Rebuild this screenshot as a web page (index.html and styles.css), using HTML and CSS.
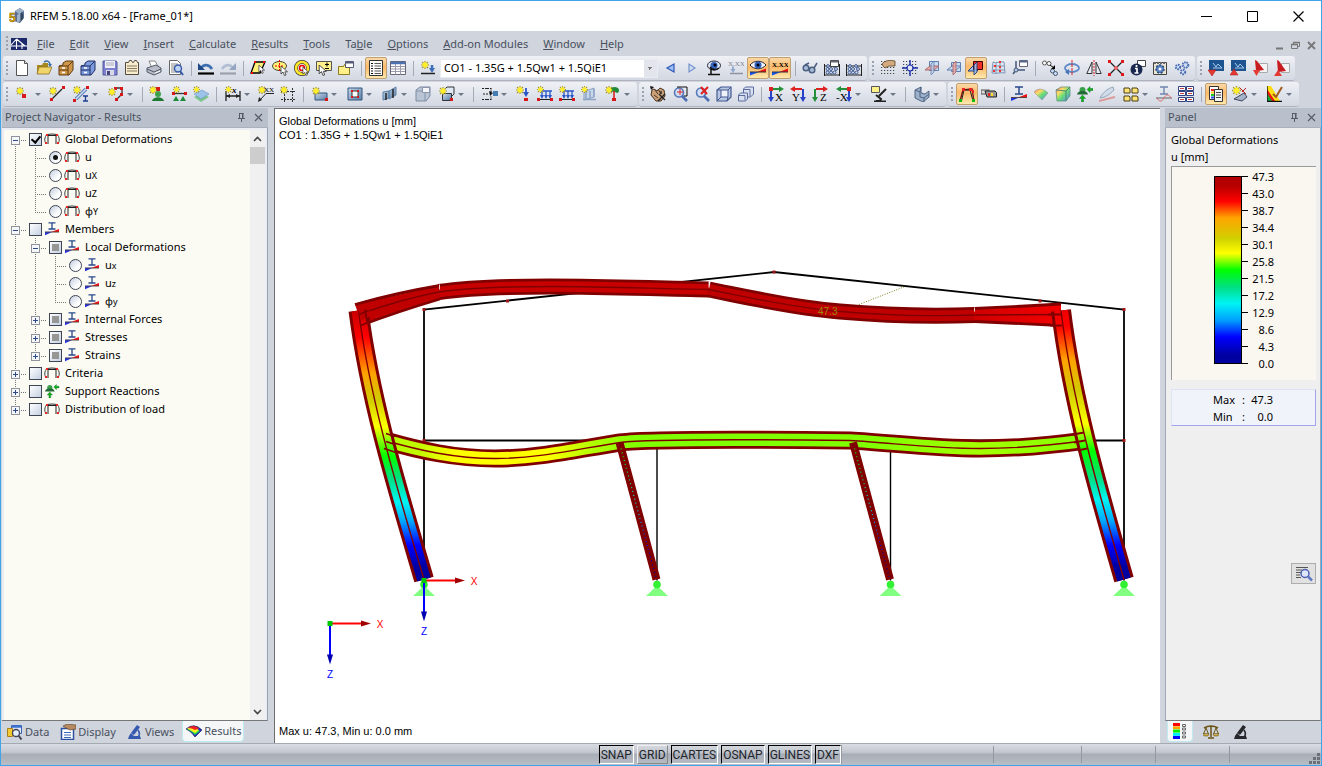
FILE: index.html
```html
<!DOCTYPE html>
<html lang="en">
<head>
  <meta charset="UTF-8">
  <meta name="viewport" content="width=device-width, initial-scale=1.0">
  <title>RFEM 5.18.00 x64 - [Frame_01*]</title>
  <link rel="stylesheet" href="styles.css">
</head>
<body>

<!-- icon sprite -->
<svg class="sprite" aria-hidden="true">
  <defs>
    <linearGradient id="g-steel" x1="0" y1="0" x2="1" y2="1"><stop offset="0" stop-color="#c6d8ea"/><stop offset="1" stop-color="#5c7da4"/></linearGradient>
    <linearGradient id="g-gold" x1="0" y1="0" x2="0" y2="1"><stop offset="0" stop-color="#f6e088"/><stop offset="1" stop-color="#b08a20"/></linearGradient>
    <linearGradient id="g-rain" x1="0" y1="0" x2="1" y2="1"><stop offset="0" stop-color="#f66"/><stop offset=".3" stop-color="#fd6"/><stop offset=".55" stop-color="#6d7"/><stop offset="1" stop-color="#58e"/></linearGradient>
  </defs>
  <symbol id="star" viewBox="0 0 8 8"><path d="M4 0v8M0 4h8M1 1l6 6M7 1L1 7" stroke="#a89828" stroke-width="1.200"/><circle cx="4" cy="4" r="2.400" fill="#ffef20"/><path d="M4 1v6M1 4h6" stroke="#ffee30"/></symbol>
  <symbol id="i-app" viewBox="0 0 16 16"><path d="M6 3l5-3 4 3v7l-4 5-6-2z" fill="#58708e"/><path d="M6 3l5-3 4 3-5 3zM8 7l3-2v8l-3 2z" fill="#9db1c8"/><path d="M12 4l2 2v5l-2 2z" fill="#34475f"/></symbol>
  <symbol id="i-bridge" viewBox="0 0 16 12"><path d="M0 0h16v12H0z" fill="#1c2a6c"/><path d="M0 8h16M5.500 1v10M11 5v6M5.500 1L0 7M5.500 1L14 8" stroke="#fff" stroke-width="1.100" fill="none"/></symbol>
  <symbol id="i-new" viewBox="0 0 16 16"><path d="M2.500.5h8l3 3v12h-11z" fill="#fff" stroke="#555"/><path d="M10.500.5v3h3" fill="#ddd" stroke="#555"/></symbol>
  <symbol id="i-open" viewBox="0 0 16 16"><path d="M1 5h5l1-2h5v11H1z" fill="#a8891f"/><path d="M3 7h13l-3 7H1z" fill="#f0d66a" stroke="#8a7020" stroke-width=".8"/><path d="M8 2c3-2 5-1 6 2" fill="none" stroke="#3c6ea8" stroke-width="1.600"/><path d="M12 4h4l-2 3z" fill="#3c6ea8"/></symbol>
  <symbol id="i-boxo" viewBox="0 0 16 16"><path d="M1 6l4-1V3l3-2h7v9l-4 5H1z" fill="#d0964a" stroke="#5e3c10"/><path d="M1 6h9l5-5M10 6v9M1 10h9" stroke="#5e3c10" fill="none"/><path d="M4 8h3M4 12.500h3" stroke="#fff" stroke-width="1.500"/></symbol>
  <symbol id="i-boxb" viewBox="0 0 16 16"><path d="M1 6l4-1V3l3-2h7v9l-4 5H1z" fill="#7d9bdc" stroke="#1e2f6a"/><path d="M1 6h9l5-5M10 6v9M1 10h9" stroke="#1e2f6a" fill="none"/><path d="M4 8h3M4 12.500h3" stroke="#fff" stroke-width="1.500"/></symbol>
  <symbol id="i-save" viewBox="0 0 16 16"><path d="M1 1h13l1 1v13H1z" fill="#7d7fd0" stroke="#555a9c"/><path d="M3 1h10v7H3z" fill="#eef0f6"/><path d="M4 3h8M4 5h8" stroke="#aab"/><path d="M4 10h8v5H4z" fill="#d8d8e8"/><path d="M5 11h3v4H5z" fill="#444878"/></symbol>
  <symbol id="i-report" viewBox="0 0 16 16"><path d="M1.500 2.500h3l1-2h2l1 2h1l1-2h2l1 2h1v12h-13z" fill="#f6edcf" stroke="#554a3a"/><path d="M3 6h10M3 8.500h10M3 11h10" stroke="#8c7b5c"/></symbol>
  <symbol id="i-print" viewBox="0 0 16 16"><path d="M3 1h6l3 5-6 2z" fill="#fff" stroke="#888"/><path d="M1 8l9-3 5 3v4l-7 3-7-3z" fill="#b9bdc9" stroke="#555a68"/><path d="M1 9l7 3 7-3" fill="none" stroke="#555a68"/><path d="M9 13l5-2" stroke="#fff"/></symbol>
  <symbol id="i-preview" viewBox="0 0 16 16"><path d="M1.500.5h8l3 3v11h-11z" fill="#fff" stroke="#666"/><path d="M3 4h7M3 6h7M3 8h5M3 10h5M3 12h6" stroke="#888"/><circle cx="10" cy="8.500" r="3.500" fill="#bcd4f2" stroke="#3759a8" stroke-width="1.400"/><path d="M12.500 11.500L15 15" stroke="#3759a8" stroke-width="2"/></symbol>
  <symbol id="i-undo" viewBox="0 0 16 16"><path d="M3 8c3-4 8-4 11 1" fill="none" stroke="#3f6fb0" stroke-width="2.600"/><path d="M0 3v7h7z" fill="#1f4a86"/><path d="M0 13.500h16" stroke="#000" stroke-width="2.200"/></symbol>
  <symbol id="i-redo" viewBox="0 0 16 16"><path d="M13 8C10 4 5 4 2 9" fill="none" stroke="#b3c0d4" stroke-width="2.600"/><path d="M16 3v7H9z" fill="#93a5c0"/><path d="M0 13.500h16" stroke="#9aa0ac" stroke-width="2.200"/></symbol>
  <symbol id="cursor" viewBox="0 0 8 10"><path d="M1 0v8l2-2 1.500 3.500L6 9 4.800 5.800H7.500z" fill="#fff" stroke="#333" stroke-width=".8"/></symbol>
  <symbol id="i-selpoly" viewBox="0 0 16 16"><path d="M5 2h10L10 13H1z" fill="#fff27a" stroke="#000" stroke-width="1.300"/><path d="M4 1h2v2H4zM13 1h2v2h-2zM1 12h2v2H1z" fill="#e00"/><use href="#cursor" x="8" y="5" width="7" height="9"/></symbol>
  <symbol id="i-selell" viewBox="0 0 16 16"><ellipse cx="7.500" cy="6" rx="7" ry="4.500" fill="#fff27a" stroke="#443"/><path d="M7.500 0v12M3 6h9" stroke="#e00" stroke-dasharray="2 1"/><use href="#cursor" x="8" y="6" width="8" height="10"/></symbol>
  <symbol id="i-selring" viewBox="0 0 16 16"><circle cx="8" cy="8" r="6" fill="#fff" stroke="#333" stroke-width="4"/><circle cx="8" cy="8" r="6" fill="none" stroke="#ffe92a" stroke-width="2.600"/><circle cx="8" cy="8" r="2.500" fill="none" stroke="#e00" stroke-width="1.500"/><use href="#cursor" x="8" y="7" width="7" height="9"/></symbol>
  <symbol id="i-selpm" viewBox="0 0 16 16"><path d="M.5 1.500h15v9H.5z" fill="#fff08a" stroke="#555"/><path d="M9 4.500h4M11 2.500v4M9 8.500h4" stroke="#000"/><use href="#cursor" x="2" y="5" width="9" height="11"/></symbol>
  <symbol id="i-selwin" viewBox="0 0 16 16"><path d="M.5 6.500h5l1-2h5v10H.5z" fill="#fff08a" stroke="#8c7b20"/><path d="M7.500 1.500h8v6h-8z" fill="#fff" stroke="#555a78"/><path d="M8 2.500h7" stroke="#555a78" stroke-width="2"/></symbol>
  <symbol id="i-nav" viewBox="0 0 16 16"><path d="M1.500.5h13v15h-13z" fill="#fff" stroke="#333"/><path d="M3 3.500h2M3 6h2M3 8.500h2M3 11h2M3 13.500h2" stroke="#111" stroke-width="1.200"/><path d="M6.500 3.500h6.500M6.500 6h6.500M6.500 8.500h6.500M6.500 11h6.500M6.500 13.500h6.500" stroke="#555"/></symbol>
  <symbol id="i-table" viewBox="0 0 16 16"><path d="M.5 1.500h15v13H.5z" fill="#fff" stroke="#667"/><path d="M1 3h14" stroke="#4b72b0" stroke-width="2.500"/><path d="M5.500 4v10.500M10.500 4v10.500M1 6.500h14M1 9h14M1 11.500h14" stroke="#99a"/></symbol>
  <symbol id="i-newload" viewBox="0 0 16 16"><use href="#star" x="1" y="1" width="8" height="8"/><path d="M1 13.500h14" stroke="#222" stroke-width="1.500"/><path d="M12 5v5" stroke="#3f6fb8" stroke-width="2.500"/><path d="M9 8h6l-3 5z" fill="#3f6fb8"/></symbol>
  <symbol id="i-prev" viewBox="0 0 16 16"><path d="M12 4v8L5 8z" fill="#9fc0f2" stroke="#2e58b8" stroke-width="1.200"/></symbol>
  <symbol id="i-next" viewBox="0 0 16 16"><path d="M5 4v8l6-4z" fill="#cfdcf2" stroke="#7492cc" stroke-width="1.200"/></symbol>
  <symbol id="i-eyesup" viewBox="0 0 16 16"><ellipse cx="8" cy="5.500" rx="6.500" ry="4.500" fill="#dfe8f8" stroke="#223"/><circle cx="8" cy="5.500" r="3.500" fill="#2f5fb8"/><circle cx="9" cy="5" r="1.500" fill="#001"/><path d="M4 7c3 4 6 3 9 1M5 8v6M2 14.500h12" fill="none" stroke="#111" stroke-width="1.500"/></symbol>
  <symbol id="i-xxload" viewBox="0 0 16 16"><path d="M2 13.500h13" stroke="#8d93a2" stroke-width="1.500"/><path d="M5 6.500v3" stroke="#93aad0" stroke-width="2"/><path d="M2.500 9h5L5 13z" fill="#93aad0"/></symbol>
  <symbol id="i-wedge" viewBox="0 0 16 16"><path d="M0 15.500V12h9z" fill="#15e"/><path d="M7 12h9V8.500z" fill="#e11"/><path d="M0 12h16" stroke="#333"/></symbol>
  <symbol id="i-eyeres" viewBox="0 0 16 16"><path d="M0 5C4 0 12 0 16 5c-4 5-12 5-16 0z" fill="#f4f6fb" stroke="#223"/><circle cx="8" cy="5" r="3.500" fill="#2f5fb8"/><circle cx="8" cy="5" r="1.500" fill="#001"/><use href="#i-wedge" width="16" height="16"/></symbol>
  <symbol id="i-glasses" viewBox="0 0 16 16"><g fill="#a8bcd8" stroke="#4a5f80" stroke-width="1.500"><circle cx="4" cy="8" r="2.800"/><circle cx="10" cy="10" r="2.800"/></g><path d="M3 5l4-2M12 8l3-5M7 8l1 1" stroke="#4a5f80" stroke-width="1.500"/></symbol>
  <symbol id="i-abacus" viewBox="0 0 16 16"><path d="M.5 4v12M15.500 4v12M1 6h14M1 15h14" stroke="#222"/><g fill="#c8d8f0" stroke="#27407c" stroke-width=".8"><circle cx="3.500" cy="9" r="1.500"/><circle cx="7" cy="9" r="1.500"/><circle cx="12" cy="9" r="1.500"/><circle cx="3.500" cy="12.500" r="1.500"/><circle cx="7" cy="12.500" r="1.500"/><circle cx="10.500" cy="12.500" r="1.500"/><circle cx="10" cy="6" r="1.400"/><circle cx="4" cy="6" r="1.400"/></g></symbol>
  <symbol id="i-abacusw" viewBox="0 0 16 16"><use href="#i-abacus" width="16" height="16"/><path d="M6.500.5h8v6h-8z" fill="#fff" stroke="#444"/><path d="M7 1.500h7" stroke="#667" stroke-width="2"/></symbol>
  <symbol id="dots" viewBox="0 0 16 16"><path d="M1 1.500h15M1 4.500h15M1 7.500h15M1 10.500h15M1 13.500h15" stroke="#444" stroke-width="1.200" stroke-dasharray="1.200 1.800"/></symbol>
  <symbol id="i-gridhand" viewBox="0 0 16 16"><use href="#dots" width="16" height="16"/><path d="M2 4c3-4 8-4 13-3v5H9L5 8 3 6z" fill="#d2aa7e" stroke="#5c4025" stroke-width=".8"/></symbol>
  <symbol id="i-gridsnap" viewBox="0 0 16 16"><use href="#dots" width="16" height="16"/><circle cx="8" cy="8" r="3" fill="#e4e8f6" stroke="#1a2ca8" stroke-width="1.200"/><path d="M8 0v5M8 11v5M0 8h5M11 8h5" stroke="#1a2ca8" stroke-width="1.400"/></symbol>
  <symbol id="i-plane1" viewBox="0 0 16 16"><path d="M5.500 1.500h9v9h-9z" fill="#cadcf0" stroke="#5c7fb0"/><path d="M1 10l5-4h9l-5 4z" fill="#eca8a4" stroke="#a86a70"/><path d="M7 4v11l3-3V1z" fill="#b8cce6" opacity=".75" stroke="#5c7fb0"/></symbol>
  <symbol id="i-plane2" viewBox="0 0 16 16"><path d="M5.500 2.500h9v9h-9z" fill="#cadcf0" stroke="#5c7fb0"/><path d="M1 10l5-4h9l-5 4z" fill="#cfdcee" stroke="#5c7fb0"/><path d="M7 4v11l3-3V1z" fill="#eca8a4" opacity=".9" stroke="#a86a70"/></symbol>
  <symbol id="i-plane3" viewBox="0 0 16 16"><path d="M0 11l5-5h9l-5 5z" fill="#9fc0ea" stroke="#1f3f80"/><path d="M5.500 1.500h9v8h-9z" fill="#f03028" stroke="#400"/><path d="M6 5v10l3-3V2z" fill="#9fc0ea" opacity=".9" stroke="#1f3f80"/></symbol>
  <symbol id="i-gridred" viewBox="0 0 16 16"><path d="M3 2c3 2 7-1 11 0l1 11c-4-1-8 1-13 0zM6 3v11M10 2v11M3 6h11M3 10h12" fill="none" stroke="#7d97bb"/><path d="M4 5h2v2H4zM9 1h2v2H9zM9 6h2v2H9zM3 10h2v2H3zM9 10h2v2H9z" fill="#e33"/></symbol>
  <symbol id="i-axwin" viewBox="0 0 16 16"><path d="M4 1v10M4 10h9M4 10l-3 4" fill="none" stroke="#44597c" stroke-width="1.500"/><circle cx="4" cy="10" r="2" fill="#b9c8e0" stroke="#44597c"/><path d="M7.500.5h8v6h-8z" fill="#fff" stroke="#667"/><path d="M8 1.500h7" stroke="#56698c" stroke-width="2"/></symbol>
  <symbol id="i-move" viewBox="0 0 16 16"><circle cx="2.500" cy="3" r="2" fill="#fff" stroke="#555"/><circle cx="7" cy="3.500" r="2" fill="#fff" stroke="#555"/><circle cx="10.500" cy="11" r="2" fill="#c8dcff" stroke="#456"/><circle cx="13.500" cy="13.500" r="2" fill="#c8dcff" stroke="#456"/><path d="M8 5l4 3" stroke="#000"/><path d="M13 5v4H9z" fill="#000"/></symbol>
  <symbol id="i-rotate" viewBox="0 0 16 16"><ellipse cx="8" cy="8" rx="7" ry="4" fill="none" stroke="#5f88c8" stroke-width="1.800"/><path d="M8 0v16" stroke="#d22" stroke-dasharray="3 1"/><path d="M5 9v6l-4-3z" fill="#4a74b8"/></symbol>
  <symbol id="i-mirror" viewBox="0 0 16 16"><path d="M6 2v11.500H.8zM10 2v11.500h5.200z" fill="#e8ecf4" stroke="#333"/><path d="M8 0v16" stroke="#d22" stroke-dasharray="2 1"/></symbol>
  <symbol id="i-cross" viewBox="0 0 16 16"><path d="M2 2l12 12M14 2L2 14" stroke="#222" stroke-width="1.300"/><path d="M0 0h3v3H0zM13 0h3v3h-3zM0 13h3v3H0zM13 13h3v3h-3z" fill="#e01818"/><circle cx="8" cy="8" r="2" fill="#e66"/></symbol>
  <symbol id="i-info" viewBox="0 0 16 16"><path d="M7.500.5h8v6h-8z" fill="#fff" stroke="#444"/><circle cx="6.500" cy="9.500" r="6" fill="#1a2850"/><path d="M6.500 5v2M5 8.500h2v4.500M4.500 13h4" stroke="#fff" stroke-width="1.700" fill="none"/></symbol>
  <symbol id="i-calgear" viewBox="0 0 16 16"><path d="M1.500 2.500h13v12h-13z" fill="#ebe6d4" stroke="#444"/><path d="M2 3h12" stroke="#666" stroke-width="2" stroke-dasharray="2 1"/><circle cx="8" cy="9" r="4" fill="#5a80c0"/><circle cx="8" cy="9" r="4" fill="none" stroke="#26477e" stroke-width="1.500" stroke-dasharray="2 1.500"/><circle cx="8" cy="9" r="1.500" fill="#fff"/></symbol>
  <symbol id="i-gears" viewBox="0 0 16 16"><g fill="#cddcf4" stroke="#4a6cb0" stroke-width="2" stroke-dasharray="1.500 .8"><circle cx="4" cy="7" r="2.200"/><circle cx="11.500" cy="5" r="2.800"/><circle cx="9" cy="12" r="2.200"/></g></symbol>
  <symbol id="i-impb" viewBox="0 0 16 16"><path d="M1 0h15v11H1z" fill="#1e5490"/><path d="M5 3l3 4 2-3 4 4M5 8h9" stroke="#a7cdf0" fill="none"/><path d="M0 10h8l-4 6z" fill="#e33a34" stroke="#a11" stroke-width=".5"/></symbol>
  <symbol id="i-expb" viewBox="0 0 16 16"><path d="M1 0h15v11H1z" fill="#1e5490"/><path d="M5 3l3 4 2-3 4 4M5 8h9" stroke="#a7cdf0" fill="none"/><path d="M0 15h8l-4-6z" fill="#e33a34" stroke="#a11" stroke-width=".5"/></symbol>
  <symbol id="i-impr" viewBox="0 0 16 16"><path d="M7.500 3.500h8v9h-8z" fill="#f4f4f4" stroke="#aaa"/><path d="M3 0l2 1 7 9-8 1z" fill="#c81c20"/><path d="M1 10h7l-3.500 6z" fill="#e33a34"/></symbol>
  <symbol id="i-expr" viewBox="0 0 16 16"><path d="M7.500 3.500h8v9h-8z" fill="#f4f4f4" stroke="#aaa"/><path d="M3 0l2 1 7 10-8 1z" fill="#c81c20"/><path d="M0 16h8l-4-6z" fill="#e33a34"/></symbol>
  <!-- second row -->
  <symbol id="i-node" viewBox="0 0 16 16"><use href="#star" x="0" y="1" width="8" height="8"/><path d="M6 8h4v4H6z" fill="#d81818"/></symbol>
  <symbol id="i-line" viewBox="0 0 16 16"><path d="M3 13L13 3" stroke="#222" stroke-width="1.300"/><path d="M13 0h3v3h-3zM1 12h3v3H1z" fill="#d81818"/><use href="#star" x="0" y="1" width="8" height="8"/></symbol>
  <symbol id="i-member" viewBox="0 0 16 16"><path d="M3 13L13 3" stroke="#5b7eb4" stroke-width="3.500"/><path d="M3 13L13 3" stroke="#cfe0f5" stroke-width="1.500"/><path d="M13 0h3v3h-3zM0 13h3v3H0z" fill="#d81818"/><path d="M10 10h5M12.500 10v5M10 15h5" stroke="#1e3c90" stroke-width="1.300"/><use href="#star" x="0" y="0" width="8" height="8"/></symbol>
  <symbol id="i-polyl" viewBox="0 0 16 16"><path d="M6 2h8v6l-6 6" fill="none" stroke="#333" stroke-width="1.300"/><path d="M6 1h3v3H6zM12 1h3v3h-3zM12 7h3v3h-3zM7 12h3v3H7z" fill="#d81818"/><use href="#star" x="0" y="2" width="8" height="8"/></symbol>
  <symbol id="i-nsup" viewBox="0 0 16 16"><path d="M7 1h4v4H7z" fill="#d81818"/><circle cx="9" cy="8" r="3" fill="#3ba04a"/><path d="M3 15c1-5 11-5 12 0z" fill="#1d7a30"/><use href="#star" x="0" y="0" width="8" height="8"/></symbol>
  <symbol id="i-lsup" viewBox="0 0 16 16"><path d="M2 7.500h13" stroke="#333" stroke-width="1.300"/><path d="M1 6h3v3H1zM13 6h3v3h-3z" fill="#d81818"/><path d="M2 15l3-5 3 5zM9 15l3-5 3 5z" fill="#1f8a38"/><use href="#star" x="2" y="0" width="7" height="7"/></symbol>
  <symbol id="i-ssup" viewBox="0 0 16 16"><path d="M1 11l8-4 7 4-8 5z" fill="#7cc68a"/><path d="M1 8l8-4 7 4-8 5z" fill="#9bc3ea" stroke="#6b93bd" stroke-width=".6"/><use href="#star" x="0" y="0" width="7" height="7"/></symbol>
  <symbol id="i-dim" viewBox="0 0 16 16"><path d="M1 5v10M15 5v10M1 10h14" stroke="#222" stroke-width="1.300"/><path d="M1 10l4-2v4zM15 10l-4-2v4z" fill="#222"/><use href="#star" x="0" y="0" width="7" height="7"/></symbol>
  <symbol id="i-cmt" viewBox="0 0 16 16"><path d="M2 14L8 7.500h8" stroke="#222" fill="none"/><path d="M0 16l1-5 3 3z" fill="#222"/><use href="#star" x="0" y="0" width="8" height="8"/></symbol>
  <symbol id="i-guide" viewBox="0 0 16 16"><path d="M4.500 2v14M12.500 2v14M1 5.500h15M1 13.500h15" stroke="#333" stroke-dasharray="2 1"/><use href="#star" x="0" y="0" width="8" height="8"/></symbol>
  <symbol id="i-surf" viewBox="0 0 16 16"><path d="M3 7h12v7H3z" fill="url(#g-steel)" stroke="#33587f"/><path d="M13 12h3v3h-3z" fill="#d81818"/><use href="#star" x="0" y="1" width="8" height="8"/></symbol>
  <symbol id="i-opening" viewBox="0 0 16 16"><path d="M1 2h14v12H1z" fill="url(#g-steel)" stroke="#33587f"/><path d="M5 5h6v6H5z" fill="#fff" stroke="#333"/><path d="M4 4h2v2H4zM10 4h2v2h-2zM4 10h2v2H4zM10 10h2v2h-2z" fill="#d81818"/></symbol>
  <symbol id="i-intersect" viewBox="0 0 16 16"><path d="M1 6l6-1v7l-6 2zM7 5l7-4v8l-7 4z" fill="url(#g-steel)" stroke="#5d82a9"/><path d="M4 7v7M11 3v9" stroke="#111" stroke-width="1.300"/></symbol>
  <symbol id="i-solid" viewBox="0 0 16 16"><path d="M1 4l4-3h10v9l-4 5H1z" fill="#b9c4d4" stroke="#7e8ca2"/><path d="M1 5h9v10M10 5l5-4" fill="none" stroke="#8796ac"/><path d="M7.500 1.500h7v5h-7z" fill="#f4f6fa" stroke="#8796ac"/></symbol>
  <symbol id="i-solidn" viewBox="0 0 16 16"><path d="M3.500 7.500h9v7h-9zM5 4l3-3h7v7l-3 3" fill="#dfe9f4" stroke="#333"/><path d="M4 8h8v6H4z" fill="url(#g-steel)"/><path d="M11 12h3v3h-3z" fill="#d81818"/><use href="#star" x="0" y="1" width="8" height="8"/></symbol>
  <symbol id="i-flow" viewBox="0 0 16 16"><path d="M0 2.500h5M0 13.500h5M5 2.500h4v4M5 13.500h4v-3M1 8h6" fill="none" stroke="#222" stroke-width="1.200" stroke-dasharray="2 1"/><path d="M11 5h5v5h-5z" fill="#447cb4"/><path d="M7 5l4 2-3 3z" fill="#111"/></symbol>
  <symbol id="i-nload" viewBox="0 0 16 16"><path d="M11 2v6" stroke="#2b58c8" stroke-width="1.800"/><path d="M8 6h6l-3 5z" fill="#2b58c8"/><path d="M9 12h4v3H9z" fill="#d81818"/><use href="#star" x="1" y="0" width="8" height="8"/></symbol>
  <symbol id="i-mload" viewBox="0 0 16 16"><path d="M3 5h12M5 5v6M9 5v6M13 5v6" stroke="#2b58c8" stroke-width="1.300"/><path d="M3 9h4l-2 4zM7 9h4l-2 4zM11 9h4l-2 4z" fill="#2b58c8"/><path d="M1 13.500h14" stroke="#222"/><path d="M0 12h3v3H0zM13 12h3v3h-3z" fill="#d81818"/><use href="#star" x="0" y="0" width="7" height="7"/></symbol>
  <symbol id="i-sload" viewBox="0 0 16 16"><path d="M3 6l10-4v9L3 14z" fill="#c7d8ec" stroke="#8aa0be"/><path d="M5 6v7M9 5v7M13 3v8M2 13.500h13" stroke="#8ea4c6" stroke-width="1.500"/><use href="#star" x="0" y="0" width="7" height="7"/></symbol>
  <symbol id="i-imp" viewBox="0 0 16 16"><path d="M5 4c0-4 9-4 9 0s-3 3-4 2-5 1-5-2z" fill="#1f8a38"/><path d="M9 5v8" stroke="#d81818" stroke-width="1.500"/><path d="M7 12h4v3H7z" fill="#d81818"/><use href="#star" x="0" y="0" width="8" height="8"/></symbol>
  <symbol id="i-hand" viewBox="0 0 16 16"><path d="M2 4l2-1 3 2 3-3 4 2 1 6-4 5H6L1 9z" fill="#c9a077" stroke="#4a3420"/><path d="M5 4l3 4M8 3l3 5M4 9l4 3" stroke="#4a3420"/><path d="M9 8l6 6M15 8l-7 7M11 5v3" stroke="#222" stroke-width="1.300"/><path d="M0 0l4 1-3 3z" fill="#111"/></symbol>
  <symbol id="mag" viewBox="0 0 16 16"><circle cx="7" cy="6.500" r="4.500" fill="#cfe0f6" stroke="#5878b8" stroke-width="1.600"/><path d="M10 10l5 5" stroke="#4e6eb4" stroke-width="2.600"/></symbol>
  <symbol id="i-zoomw" viewBox="0 0 16 16"><use href="#mag" width="16" height="16"/><path d="M5 1h10v9h-3" fill="none" stroke="#111"/><path d="M5 6h6M8 3v6" stroke="#d22"/></symbol>
  <symbol id="i-zoomx" viewBox="0 0 16 16"><use href="#mag" width="16" height="16"/><path d="M7 1l6 7M14 1L7 8" stroke="#e02020" stroke-width="2"/></symbol>
  <symbol id="i-cube" viewBox="0 0 16 16"><path d="M1 4l4-3h10v10l-4 4H1z" fill="#b9c8e4" stroke="#43598e" stroke-width="1.200"/><path d="M5 4h7v7H5zM1 4h4M12 4l3-3M12 11l-1 4M5 11l-4 4" fill="#eef3fb" stroke="#43598e"/></symbol>
  <symbol id="i-cubes" viewBox="0 0 16 16"><g fill="#d8e0f2" stroke="#5a6c9c"><path d="M5.500 3l2-2h8v7l-3 3h-7z"/><path d="M6 3.500h6v7"/><path d="M.5 9l2-2h7v6l-2 2h-7z"/><path d="M1 9.500h6v5"/></g></symbol>
  <symbol id="i-vx" viewBox="0 0 16 16"><path d="M4 3h8" stroke="#25903a" stroke-width="2"/><path d="M11 0l5 3-5 3z" fill="#25903a"/><path d="M3 3v9" stroke="#2842c8" stroke-width="2"/><path d="M0 11h6l-3 5z" fill="#2842c8"/><path d="M1 1h4v4H1z" fill="#d22"/></symbol>
  <symbol id="i-vy" viewBox="0 0 16 16"><path d="M12 3H4" stroke="#d22" stroke-width="2"/><path d="M5 0L0 3l5 3z" fill="#d22"/><path d="M13 3v9" stroke="#2842c8" stroke-width="2"/><path d="M10 11h6l-3 5z" fill="#2842c8"/></symbol>
  <symbol id="i-vz" viewBox="0 0 16 16"><path d="M4 3h8" stroke="#d22" stroke-width="2"/><path d="M11 0l5 3-5 3z" fill="#d22"/><path d="M3 3v9" stroke="#25903a" stroke-width="2"/><path d="M0 11h6l-3 5z" fill="#25903a"/></symbol>
  <symbol id="i-vmx" viewBox="0 0 16 16"><path d="M12 3H4" stroke="#25903a" stroke-width="2"/><path d="M5 0L0 3l5 3z" fill="#25903a"/><path d="M13 3v9" stroke="#2842c8" stroke-width="2"/><path d="M10 11h6l-3 5z" fill="#2842c8"/><path d="M11 1h4v4h-4z" fill="#d22"/></symbol>
  <symbol id="i-views" viewBox="0 0 16 16"><path d="M.5.5h8v6h-8z" fill="#fff08a" stroke="#555"/><path d="M15 3L8 10M5 9l5 4-1 2H5M3 15.500h12" stroke="#222" stroke-width="2" fill="none"/></symbol>
  <symbol id="i-block" viewBox="0 0 16 16"><path d="M1 4l6-3v6l4 1 4-3v6l-6 5-8-4z" fill="#9db0ca" stroke="#4f6584"/><path d="M1 4l5 2v5l4 1v4M10 12l5-4M6 6l1-5" stroke="#4f6584" fill="none"/></symbol>
  <symbol id="i-frame" viewBox="0 0 16 16"><path d="M1 15L4 4l9-1 2 12" fill="none" stroke="#7a1a10" stroke-width="1.400"/><path d="M2.500 15L5 4h6l3 11" fill="none" stroke="#222"/><path d="M3 2h3v3H3zM10 2h3v3h-3zM13 4h2v3h-2z" fill="#e22"/><path d="M0 13h3v3H0zM13 13h3v3h-3z" fill="#1b1"/></symbol>
  <symbol id="i-torch" viewBox="0 0 16 16"><rect x="0" y="4" width="8" height="4" fill="#d8d8d8" stroke="#555"/><path d="M4 5h10l1.500 1.500V11H6z" fill="#999" stroke="#222"/><path d="M7 7h2v3H7z" fill="#e22"/><path d="M10 7h2v3h-2z" fill="#fd2"/></symbol>
  <symbol id="i-imem" viewBox="0 0 16 16"><path d="M4 1h8M8 1v7M4 8h8" stroke="#2a4a8c" stroke-width="1.500"/><path d="M0 11h9L0 15z" fill="#23d"/><path d="M7 11.500h9V8z" fill="#e11"/><path d="M0 11.500h16" stroke="#544"/></symbol>
  <symbol id="i-surfres" viewBox="0 0 16 16"><path d="M1 6c4-4 9-4 14 1l-6 7z" fill="url(#g-rain)" stroke="#888" stroke-width=".5"/></symbol>
  <symbol id="i-solres" viewBox="0 0 16 16"><path d="M1 4l5-3h9v9l-4 5H2z" fill="url(#g-rain)" stroke="#587" stroke-width=".7"/><path d="M1 4l10 1v10M11 5l4-4" fill="none" stroke="#587"/></symbol>
  <symbol id="i-supr" viewBox="0 0 16 16"><circle cx="5.500" cy="4" r="3" fill="#3aa04c"/><path d="M0 8.500c1-5 10-5 11 0z" fill="#226b34"/><path d="M10 3.500l3-3v2h3v2h-3v2zM5.500 9l3 3.500h-2V16h-2v-3.500h-2z" fill="#12b012" stroke="#063" stroke-width=".4"/></symbol>
  <symbol id="i-slice" viewBox="0 0 16 16"><path d="M1 12C5 5 10 2 14 1l1 3C10 9 7 11 1 12z" fill="#cfdbe8" stroke="#93a5ba"/><path d="M0 15l16-4" stroke="#d99" stroke-width="2"/></symbol>
  <symbol id="i-four" viewBox="0 0 16 16"><g fill="#ffe478" stroke="#4a3f10"><path d="M1 2h5l1 1v4H1zM9 2h5l1 1v4H9zM1 10h5l1 1v4H1zM9 10h5l1 1v4H9z"/></g></symbol>
  <symbol id="i-iwave" viewBox="0 0 16 16"><path d="M4 1h8M8 1v7M4 8h8" stroke="#7085ae" stroke-width="1.400"/><path d="M0 12h16" stroke="#666"/><path d="M1 12c2 4 5 4 7 0s5-4 7 0" fill="none" stroke="#d66"/></symbol>
  <symbol id="i-multi" viewBox="0 0 16 16"><path d="M.5.5h7v4h-7zM8.500.5h7v4h-7zM.5 5.500h7v4h-7zM8.500 5.500h7v4h-7zM.5 11.500h7v4h-7zM8.500 11.500h7v4h-7z" fill="#fff" stroke="#2f4080"/><path d="M2 2.500h4M10 2.500h4M2 7.500h4M10 7.500h4M2 13.500h4M10 13.500h4" stroke="#c44"/></symbol>
  <symbol id="i-panel" viewBox="0 0 16 16"><path d="M1.500.5h9v13h-9z" fill="#fff" stroke="#333"/><path d="M6.500 3.500h8v12h-8z" fill="#f4f4f4" stroke="#333"/><path d="M3 4h3" stroke="#e22" stroke-width="2"/><path d="M3 6.500h3" stroke="#fc2" stroke-width="2"/><path d="M3 9h3" stroke="#2c2" stroke-width="2"/><path d="M3 11.500h3" stroke="#24e" stroke-width="2"/><path d="M8 6.500h5M8 9h5M8 11.500h5" stroke="#444"/></symbol>
  <symbol id="i-edge" viewBox="0 0 16 16"><path d="M2 13l10-6 3 4-5 4z" fill="#a4b4cb" stroke="#445"/><path d="M8 2l6 6M14 2l-4 4" stroke="#b22"/><use href="#star" x="0" y="0" width="9" height="9"/></symbol>
  <symbol id="i-colors" viewBox="0 0 16 16"><path d="M0 0h4l9 15H0z" fill="#fd1"/><path d="M0 3l8 12H3L0 11z" fill="#e11"/><path d="M0 7l5 8H0z" fill="#1a3"/><path d="M0 0v15.500h15" stroke="#111" stroke-width="1.300" fill="none"/><path d="M6 8l3 3 6-10" fill="none" stroke="#a25a1c" stroke-width="2"/></symbol>
  <!-- navigator and panel -->
  <symbol id="i-glob" viewBox="0 0 16 12"><path d="M4 11V2.500h8V11" fill="none" stroke="#222"/><path d="M3 1Q-1 6 2 11M13 1q4 5 1 10" fill="none" stroke="#444"/><path d="M3 1.500q5-1 10 0" fill="none" stroke="#333"/><path d="M2 1h2v2H2zM12 1h2v2h-2zM1 9h2v2H1zM13 9h2v2h-2z" fill="#e22"/></symbol>
  <symbol id="i-data" viewBox="0 0 16 16"><path d="M4.500 1.500h10v8h-10z" fill="#dfe8f8" stroke="#3b62b0"/><path d="M5 2.500h9" stroke="#3b72d0" stroke-width="2.500"/><path d="M.5 4.500h5v8h-5z" fill="#f5c932" stroke="#a8801c"/><circle cx="9" cy="9" r="3.500" fill="#e5f0ff" stroke="#445" stroke-width="1.300"/><path d="M11.500 11.500l3 4" stroke="#445" stroke-width="2"/></symbol>
  <symbol id="i-disp" viewBox="0 0 16 16"><path d="M1.500 4.500h12v11h-12z" fill="#fff" stroke="#2c50a0" stroke-width="1.500"/><path d="M4 8.500h7M4 11h7M4 13.500h7" stroke="#3a68c0"/><path d="M3 2l4-2 9 1v4l-6 1-4-2z" fill="#b78a62" stroke="#573c22" stroke-width=".6"/></symbol>
  <symbol id="i-scope" viewBox="0 0 16 16"><path d="M10 1l3 2-6 8-3-2z" fill="currentColor"/><path d="M2 12h11l1 3H1zM4 9l-2 3h5z" fill="currentColor"/><path d="M11 6c2 3 2 5 0 7" stroke="currentColor" stroke-width="1.600" fill="none"/></symbol>
  <symbol id="i-results" viewBox="0 0 16 12"><path d="M0 4Q8-3 16 5L9 12Q5 6 0 4z" fill="#22c" stroke="#124" stroke-width=".6"/><path d="M1 4Q8 2 14 6L9 10Q5 6 1 4z" fill="#2d4"/><path d="M1 3.500Q7 1 13 5L9 8Q5 5 1 3.500z" fill="#fe2"/><path d="M2 3Q8-1 13 3.500L9 5Q6 3 2 3z" fill="#e22"/></symbol>
  <symbol id="i-legend" viewBox="0 0 14 16"><path d="M0 0h7v3H0z" fill="#f00"/><path d="M0 3.300h7v3H0z" fill="#ffa500"/><path d="M0 6.600h7v3H0z" fill="#0e0"/><path d="M0 9.900h7v3H0z" fill="#0ef"/><path d="M0 13h7v3H0z" fill="#00f"/><path d="M9.500 1.500h3v2h-3zM9.500 5h3v2h-3zM9.500 9h3v2h-3zM9.500 13h3v2h-3z" fill="none" stroke="#666"/></symbol>
  <symbol id="i-scale" viewBox="0 0 16 16"><path d="M1 4q7-4 14 0M8 2v11M5 14h6" stroke="#6a5312" stroke-width="1.500" fill="none"/><path d="M3 4L.5 10h5zM13 4l-2.500 6h5z" fill="none" stroke="#6a5312"/><path d="M0 10h6l-1 2H1zM10 10h6l-1 2h-4z" fill="url(#g-gold)" stroke="#6a5312" stroke-width=".5"/></symbol>
  <symbol id="i-find" viewBox="0 0 18 16"><path d="M1 1.500h12M1 4h6M1 6.500h5M1 9h4M1 11.500h5" stroke="#555" stroke-width="1.200"/><circle cx="10" cy="7.500" r="4" fill="#dfe6fa" stroke="#4a60b0" stroke-width="1.500"/><path d="M13 10.500l4 4" stroke="#5f78c4" stroke-width="2.500"/></symbol>
  <symbol id="i-pin" viewBox="0 0 9 11"><path d="M2.500 1v5M2 1.500h4.500M6 1v5M1 6.500h7M4.500 7v3" stroke="#555c68" fill="none"/><path d="M5 2v4h1V2z" fill="#555c68"/></symbol>
  <symbol id="i-x" viewBox="0 0 9 9"><path d="M1 1l7 7M8 1L1 8" stroke="#555c68" stroke-width="1.200"/></symbol>
</svg>

<div class="window">
  <header class="titlebar">
    <svg class="ic" viewBox="0 0 16 16"><use href="#i-app"/><text class="five" x="0" y="14">5</text></svg>
    <span class="caption">RFEM 5.18.00 x64 - [Frame_01*]</span>
    <div class="winbtns">
      <button aria-label="Minimize"><svg viewBox="0 0 11 11"><path d="M0 5.500h11" stroke="#000"/></svg></button>
      <button aria-label="Maximize"><svg viewBox="0 0 11 11"><path d="M.5.5h10v10H.5z" fill="none" stroke="#000"/></svg></button>
      <button aria-label="Close"><svg viewBox="0 0 11 11"><path d="M.5.5l10 10M10.500.5l-10 10" stroke="#000" stroke-width="1.200"/></svg></button>
    </div>
  </header>

  <nav class="menubar">
    <i class="grip"></i>
    <svg class="logo"><use href="#i-bridge"/></svg>
    <button><u>F</u>ile</button>
    <button><u>E</u>dit</button>
    <button><u>V</u>iew</button>
    <button><u>I</u>nsert</button>
    <button><u>C</u>alculate</button>
    <button><u>R</u>esults</button>
    <button><u>T</u>ools</button>
    <button>Ta<u>b</u>le</button>
    <button><u>O</u>ptions</button>
    <button><u>A</u>dd-on Modules</button>
    <button><u>W</u>indow</button>
    <button><u>H</u>elp</button>
    <div class="mdi">
      <button aria-label="Minimize document"><svg viewBox="0 0 9 9"><path d="M1 7.500h7" stroke="#777" stroke-width="2"/></svg></button>
      <button aria-label="Restore document"><svg viewBox="0 0 9 9"><path d="M.5 3.500h6v4h-6zM2.500 3V1.500h6v4H7" fill="none" stroke="#777"/><path d="M0 3.500h7M2 1.500h7" stroke="#777" stroke-width="1.500"/></svg></button>
      <button aria-label="Close document"><svg viewBox="0 0 9 9"><path d="M1 1l7 7M8 1L1 8" stroke="#777" stroke-width="1.800"/></svg></button>
    </div>
  </nav>

  <div class="toolrow">
    <div class="bar">
      <i class="grip"></i>
      <button aria-label="New"><svg class="ic"><use href="#i-new"/></svg></button>
      <button aria-label="Open"><svg class="ic"><use href="#i-open"/></svg></button>
      <button aria-label="Project manager"><svg class="ic"><use href="#i-boxo"/></svg></button>
      <button aria-label="Block manager"><svg class="ic"><use href="#i-boxb"/></svg></button>
      <button aria-label="Save"><svg class="ic"><use href="#i-save"/></svg></button>
      <button aria-label="Printout report"><svg class="ic"><use href="#i-report"/></svg></button>
      <button aria-label="Print"><svg class="ic"><use href="#i-print"/></svg></button>
      <button aria-label="Preview"><svg class="ic"><use href="#i-preview"/></svg></button>
      <i class="sep"></i>
      <button aria-label="Undo"><svg class="ic"><use href="#i-undo"/></svg></button>
      <button aria-label="Redo"><svg class="ic"><use href="#i-redo"/></svg></button>
      <i class="sep"></i>
      <button aria-label="Select by rhomboid"><svg class="ic"><use href="#i-selpoly"/></svg></button>
      <button aria-label="Select by ellipse"><svg class="ic"><use href="#i-selell"/></svg></button>
      <button aria-label="Select by annulus"><svg class="ic"><use href="#i-selring"/></svg></button>
      <button aria-label="Add to selection"><svg class="ic"><use href="#i-selpm"/></svg></button>
      <button aria-label="Special selection"><svg class="ic"><use href="#i-selwin"/></svg></button>
      <i class="sep"></i>
      <button class="on" aria-label="Navigator"><svg class="ic"><use href="#i-nav"/></svg></button>
      <button aria-label="Tables"><svg class="ic"><use href="#i-table"/></svg></button>
      <i class="sep"></i>
      <button aria-label="New load case"><svg class="ic"><use href="#i-newload"/></svg></button>
      <select class="combo" aria-label="Load case"><option>CO1 - 1.35G + 1.5Qw1 + 1.5QiE1</option></select>
      <button aria-label="Previous"><svg class="ic"><use href="#i-prev"/></svg></button>
      <button aria-label="Next"><svg class="ic"><use href="#i-next"/></svg></button>
      <button aria-label="Show loads"><svg class="ic"><use href="#i-eyesup"/></svg></button>
      <button aria-label="Show load values"><svg class="ic" viewBox="0 0 16 16"><use href="#i-xxload"/><text class="tiny faint" x="0" y="6">X.XX</text></svg></button>
      <button class="on" aria-label="Show results"><svg class="ic"><use href="#i-eyeres"/></svg></button>
      <button class="on" aria-label="Show result values"><svg class="ic" viewBox="0 0 16 16"><use href="#i-wedge"/><text class="tiny strong" x="0" y="7">X.XX</text></svg></button>
      <i class="sep"></i>
      <button aria-label="Check"><svg class="ic"><use href="#i-glasses"/></svg></button>
      <button aria-label="Calculation parameters"><svg class="ic"><use href="#i-abacusw"/></svg></button>
      <button aria-label="Calculate all"><svg class="ic"><use href="#i-abacus"/></svg></button>
    </div>
    <div class="bar">
      <i class="grip"></i>
      <button aria-label="Work plane settings"><svg class="ic"><use href="#i-gridhand"/></svg></button>
      <button aria-label="Snap"><svg class="ic"><use href="#i-gridsnap"/></svg></button>
      <button aria-label="Plane XY"><svg class="ic"><use href="#i-plane1"/></svg></button>
      <button aria-label="Plane YZ"><svg class="ic"><use href="#i-plane2"/></svg></button>
      <button class="on" aria-label="Plane XZ"><svg class="ic"><use href="#i-plane3"/></svg></button>
      <button aria-label="Mesh"><svg class="ic"><use href="#i-gridred"/></svg></button>
      <button aria-label="Coordinate system"><svg class="ic"><use href="#i-axwin"/></svg></button>
      <i class="sep"></i>
      <button aria-label="Move"><svg class="ic"><use href="#i-move"/></svg></button>
      <button aria-label="Rotate"><svg class="ic"><use href="#i-rotate"/></svg></button>
      <button aria-label="Mirror"><svg class="ic"><use href="#i-mirror"/></svg></button>
      <button aria-label="Connect"><svg class="ic"><use href="#i-cross"/></svg></button>
      <button aria-label="Info"><svg class="ic"><use href="#i-info"/></svg></button>
      <button aria-label="Options"><svg class="ic"><use href="#i-calgear"/></svg></button>
      <button aria-label="Settings"><svg class="ic"><use href="#i-gears"/></svg></button>
    </div>
    <div class="bar">
      <i class="grip"></i>
      <button aria-label="Import block"><svg class="ic"><use href="#i-impb"/></svg></button>
      <button aria-label="Export block"><svg class="ic"><use href="#i-expb"/></svg></button>
      <button aria-label="Import file"><svg class="ic"><use href="#i-impr"/></svg></button>
      <button aria-label="Export file"><svg class="ic"><use href="#i-expr"/></svg></button>
    </div>
  </div>

  <div class="toolrow">
    <div class="bar">
      <i class="grip"></i>
      <button class="dd" aria-label="New node"><svg class="ic"><use href="#i-node"/></svg></button>
      <button aria-label="New line"><svg class="ic"><use href="#i-line"/></svg></button>
      <button class="dd" aria-label="New member"><svg class="ic"><use href="#i-member"/></svg></button>
      <button class="dd" aria-label="New polyline"><svg class="ic"><use href="#i-polyl"/></svg></button>
      <i class="sep"></i>
      <button aria-label="New nodal support"><svg class="ic"><use href="#i-nsup"/></svg></button>
      <button aria-label="New line support"><svg class="ic"><use href="#i-lsup"/></svg></button>
      <button aria-label="New surface support"><svg class="ic"><use href="#i-ssup"/></svg></button>
      <i class="sep"></i>
      <button class="dd" aria-label="Dimension"><svg class="ic" viewBox="0 0 16 16"><use href="#i-dim"/><text class="dimx" x="7" y="7">x</text></svg></button>
      <button aria-label="Comment"><svg class="ic" viewBox="0 0 16 16"><use href="#i-cmt"/><text class="tiny" x="6" y="6">XX</text></svg></button>
      <button aria-label="Guideline"><svg class="ic"><use href="#i-guide"/></svg></button>
      <i class="sep"></i>
      <button class="dd" aria-label="New surface"><svg class="ic"><use href="#i-surf"/></svg></button>
      <button class="dd" aria-label="New opening"><svg class="ic"><use href="#i-opening"/></svg></button>
      <button class="dd" aria-label="Intersection"><svg class="ic"><use href="#i-intersect"/></svg></button>
      <button aria-label="Solid"><svg class="ic"><use href="#i-solid"/></svg></button>
      <button class="dd" aria-label="New solid"><svg class="ic"><use href="#i-solidn"/></svg></button>
      <i class="sep"></i>
      <button class="dd" aria-label="Generate"><svg class="ic"><use href="#i-flow"/></svg></button>
      <button aria-label="Nodal load"><svg class="ic"><use href="#i-nload"/></svg></button>
      <button aria-label="Member load"><svg class="ic"><use href="#i-mload"/></svg></button>
      <button aria-label="Line load"><svg class="ic"><use href="#i-mload"/></svg></button>
      <button aria-label="Surface load"><svg class="ic"><use href="#i-sload"/></svg></button>
      <button class="dd" aria-label="Imposed deformation"><svg class="ic"><use href="#i-imp"/></svg></button>
    </div>
    <div class="bar">
      <i class="grip"></i>
      <button aria-label="Pan"><svg class="ic"><use href="#i-hand"/></svg></button>
      <button aria-label="Zoom window"><svg class="ic"><use href="#i-zoomw"/></svg></button>
      <button aria-label="Zoom all"><svg class="ic"><use href="#i-zoomx"/></svg></button>
      <button aria-label="Perspective"><svg class="ic"><use href="#i-cube"/></svg></button>
      <button aria-label="Wireframe"><svg class="ic"><use href="#i-cubes"/></svg></button>
      <i class="sep"></i>
      <button aria-label="View in X"><svg class="ic" viewBox="0 0 16 16"><use href="#i-vx"/><text class="axis" x="7" y="15">X</text></svg></button>
      <button aria-label="View in Y"><svg class="ic" viewBox="0 0 16 16"><use href="#i-vy"/><text class="axis" x="2" y="15">Y</text></svg></button>
      <button aria-label="View in Z"><svg class="ic" viewBox="0 0 16 16"><use href="#i-vz"/><text class="axis" x="8" y="15">Z</text></svg></button>
      <button class="dd" aria-label="View in -X"><svg class="ic" viewBox="0 0 16 16"><use href="#i-vmx"/><text class="axis" x="0" y="15">-X</text></svg></button>
      <button class="dd" aria-label="User views"><svg class="ic"><use href="#i-views"/></svg></button>
      <i class="sep"></i>
      <button class="dd" aria-label="Rendering"><svg class="ic"><use href="#i-block"/></svg></button>
    </div>
    <div class="bar">
      <i class="grip"></i>
      <button class="on" aria-label="Deformations"><svg class="ic"><use href="#i-frame"/></svg></button>
      <button aria-label="Light"><svg class="ic"><use href="#i-torch"/></svg></button>
      <i class="sep"></i>
      <button aria-label="Member results"><svg class="ic"><use href="#i-imem"/></svg></button>
      <button aria-label="Surface results"><svg class="ic"><use href="#i-surfres"/></svg></button>
      <button aria-label="Solid results"><svg class="ic"><use href="#i-solres"/></svg></button>
      <button aria-label="Support results"><svg class="ic"><use href="#i-supr"/></svg></button>
      <button aria-label="Sections"><svg class="ic"><use href="#i-slice"/></svg></button>
      <button class="dd" aria-label="Smoothing"><svg class="ic"><use href="#i-four"/></svg></button>
      <button aria-label="Result diagrams"><svg class="ic"><use href="#i-iwave"/></svg></button>
      <button aria-label="Multiple windows"><svg class="ic"><use href="#i-multi"/></svg></button>
      <i class="sep"></i>
      <button class="on" aria-label="Control panel"><svg class="ic"><use href="#i-panel"/></svg></button>
      <button class="dd" aria-label="Clipping"><svg class="ic"><use href="#i-edge"/></svg></button>
      <button class="dd" aria-label="Colors"><svg class="ic"><use href="#i-colors"/></svg></button>
    </div>
  </div>

  <main class="work">
    <aside class="dock navigator">
      <div class="dockhead"><span>Project Navigator - Results</span><button aria-label="Pin"><svg class="pin"><use href="#i-pin"/></svg></button><button aria-label="Close"><svg class="x"><use href="#i-x"/></svg></button></div>
      <div class="treebox">
        <ul class="tree">
          <li>
            <div class="row"><button class="exp" aria-label="Collapse"></button><label><input type="checkbox" checked><svg class="ticon g"><use href="#i-glob"/></svg>Global Deformations</label></div>
            <ul>
              <li><div class="row"><label><input type="radio" name="glob" checked><svg class="ticon g"><use href="#i-glob"/></svg><span>u</span></label></div></li>
              <li><div class="row"><label><input type="radio" name="glob"><svg class="ticon g"><use href="#i-glob"/></svg><span>u<small>X</small></span></label></div></li>
              <li><div class="row"><label><input type="radio" name="glob"><svg class="ticon g"><use href="#i-glob"/></svg><span>u<small>Z</small></span></label></div></li>
              <li><div class="row"><label><input type="radio" name="glob"><svg class="ticon g"><use href="#i-glob"/></svg><span>φ<small>Y</small></span></label></div></li>
            </ul>
          </li>
          <li>
            <div class="row"><button class="exp" aria-label="Collapse"></button><label><input type="checkbox"><svg class="ticon"><use href="#i-imem"/></svg>Members</label></div>
            <ul>
              <li>
                <div class="row"><button class="exp" aria-label="Collapse"></button><label><input type="checkbox" class="mixed"><svg class="ticon"><use href="#i-imem"/></svg>Local Deformations</label></div>
                <ul>
                  <li><div class="row"><label><input type="radio" name="loc"><svg class="ticon"><use href="#i-imem"/></svg><span>u<small>x</small></span></label></div></li>
                  <li><div class="row"><label><input type="radio" name="loc"><svg class="ticon"><use href="#i-imem"/></svg><span>u<small>z</small></span></label></div></li>
                  <li><div class="row"><label><input type="radio" name="loc"><svg class="ticon"><use href="#i-imem"/></svg><span>φ<small>y</small></span></label></div></li>
                </ul>
              </li>
              <li><div class="row"><button class="exp plus" aria-label="Expand"></button><label><input type="checkbox" class="mixed"><svg class="ticon"><use href="#i-imem"/></svg>Internal Forces</label></div></li>
              <li><div class="row"><button class="exp plus" aria-label="Expand"></button><label><input type="checkbox" class="mixed"><svg class="ticon"><use href="#i-imem"/></svg>Stresses</label></div></li>
              <li><div class="row"><button class="exp plus" aria-label="Expand"></button><label><input type="checkbox" class="mixed"><svg class="ticon"><use href="#i-imem"/></svg>Strains</label></div></li>
            </ul>
          </li>
          <li><div class="row"><button class="exp plus" aria-label="Expand"></button><label><input type="checkbox"><svg class="ticon g"><use href="#i-glob"/></svg>Criteria</label></div></li>
          <li><div class="row"><button class="exp plus" aria-label="Expand"></button><label><input type="checkbox"><svg class="ticon"><use href="#i-supr"/></svg>Support Reactions</label></div></li>
          <li><div class="row"><button class="exp plus" aria-label="Expand"></button><label><input type="checkbox"><svg class="ticon g"><use href="#i-glob"/></svg>Distribution of load</label></div></li>
        </ul>
        <div class="scroll">
          <button aria-label="Scroll up"><svg viewBox="0 0 9 6"><path d="M1 5l3.500-3.500L8 5" fill="none" stroke="#444" stroke-width="1.600"/></svg></button>
          <div class="thumb"></div>
          <button aria-label="Scroll down"><svg viewBox="0 0 9 6"><path d="M1 1l3.500 3.500L8 1" fill="none" stroke="#444" stroke-width="1.600"/></svg></button>
        </div>
      </div>
      <div class="tabs">
        <button><svg class="ic"><use href="#i-data"/></svg>Data</button>
        <button><svg class="ic"><use href="#i-disp"/></svg>Display</button>
        <button><svg class="ic blue"><use href="#i-scope"/></svg>Views</button>
        <button class="sel"><svg class="ic"><use href="#i-results"/></svg>Results</button>
      </div>
    </aside>

    <section class="view">
      <p class="note">Global Deformations u [mm]<br>CO1 : 1.35G + 1.5Qw1 + 1.5QiE1</p>
      <svg class="model" viewBox="275 145 885 575">
        <defs>
          <linearGradient id="colL" gradientUnits="userSpaceOnUse" x1="0" y1="310" x2="0" y2="580">
            <stop offset="0" stop-color="#c80000"/><stop offset=".1" stop-color="#f00"/><stop offset=".23" stop-color="#ffa000"/><stop offset=".33" stop-color="#d0cc00"/><stop offset=".43" stop-color="#ff0"/><stop offset=".54" stop-color="#0f0"/><stop offset=".62" stop-color="#00e080"/><stop offset=".71" stop-color="#00f4f4"/><stop offset=".78" stop-color="#00a8ff"/><stop offset=".87" stop-color="#00f"/><stop offset=".95" stop-color="#0000a0"/>
          </linearGradient>
          <linearGradient id="colR" gradientUnits="userSpaceOnUse" x1="0" y1="310" x2="0" y2="580">
            <stop offset="0" stop-color="#f00000"/><stop offset=".06" stop-color="#f00"/><stop offset=".18" stop-color="#ffa000"/><stop offset=".3" stop-color="#d0cc00"/><stop offset=".42" stop-color="#ff0"/><stop offset=".52" stop-color="#0f0"/><stop offset=".62" stop-color="#00e080"/><stop offset=".7" stop-color="#00f4f4"/><stop offset=".78" stop-color="#00a8ff"/><stop offset=".87" stop-color="#00f"/><stop offset=".95" stop-color="#0000a0"/>
          </linearGradient>
          <linearGradient id="floor" gradientUnits="userSpaceOnUse" x1="385" y1="0" x2="1084" y2="0">
            <stop offset="0" stop-color="#b0ff00"/><stop offset=".05" stop-color="#c4f800"/><stop offset=".1" stop-color="#ff0"/><stop offset=".23" stop-color="#ff0"/><stop offset=".3" stop-color="#b0ff00"/><stop offset=".36" stop-color="#80ff00"/><stop offset=".7" stop-color="#80ff00"/><stop offset=".85" stop-color="#a4ff00"/><stop offset="1" stop-color="#84ff00"/>
          </linearGradient>
          <linearGradient id="roofR" gradientUnits="userSpaceOnUse" x1="940" y1="0" x2="1061" y2="0"><stop offset="0" stop-color="#c00000"/><stop offset="1" stop-color="#f40000"/></linearGradient>
          <path id="pColL" d="M358.500 310C370 400 397.500 489 424 579"/>
          <path id="pColR" d="M1061 310C1072 400 1098 489 1124 579"/>
          <path id="pRoof" d="M439 291.500C470 287 510 286 550 286C610 286 650 288 709 289"/>
          <path id="pRoof2" d="M709 289C740 295 790 307 840 311C885 315 930 316 975 314.500"/>
          <path id="pFloor" d="M385 440C420 450 455 458 495 458C540 458 580 448 620 442C645 439 760 439 850 440C890 442 930 448 980 448C1015 448 1050 445 1086 440"/>
          <g id="support"><path d="M0 585l11 10.500h-22z" fill="#80ff80"/><circle cy="584" r="3.800" fill="#32f032"/></g>
          <g id="axes">
            <path d="M0 0h32" stroke="#f00" stroke-width="2"/><path d="M31-3l10 3-10 3z" fill="#a00000"/>
            <path d="M0 0v32" stroke="#00f" stroke-width="2"/><path d="M-3 31l3 10 3-10z" fill="#0000b0"/>
            <path d="M-2.500-2.500h5v5h-5z" fill="#00c800"/>
          </g>
        </defs>

        <!-- undeformed system -->
        <g fill="none" stroke="#000" stroke-width="1.800">
          <path d="M424 580V309l350-37.500L1124 309v271M424 440h700"/>
          <path d="M657 440v140M890.500 440v140" stroke-width="1.400"/>
        </g>
        <path d="M422.500 307.500h3v3h-3zM506 299h3v3h-3zM772.500 270h3v3h-3zM1038.500 299h3v3h-3zM1122.500 307.500h3v3h-3zM1122.500 438.500h3v3h-3zM422.500 438.500h3v3h-3z" fill="#a01818"/>

        <!-- roof beams -->
        <path d="M355 304L440 285V298.500Q398 310 362 324z" fill="#c00000"/>
        <path d="M355 304Q398 292 440 285M440 298.500Q398 311 362 324.500" fill="none" stroke="#800000" stroke-width="2.800"/>
        <path d="M359 314Q400 299 439 291.500" fill="none" stroke="#800000" stroke-width="1.400"/>
        <g fill="none">
          <use href="#pRoof" stroke="#800000" stroke-width="16"/><use href="#pRoof" stroke="#c80000" stroke-width="10.500"/><use href="#pRoof" stroke="#800000" stroke-width="1.400"/>
          <use href="#pRoof2" stroke="#800000" stroke-width="16"/><use href="#pRoof2" stroke="#c00000" stroke-width="10.500"/><use href="#pRoof2" stroke="#800000" stroke-width="1.400"/>
        </g>
        <path d="M974.500 308Q1020 306 1061 303V325Q1020 323 974.500 321z" fill="url(#roofR)"/>
        <path d="M974.500 308Q1020 306 1061 303.500M974.500 321Q1020 323 1061 325" fill="none" stroke="#800000" stroke-width="2.800"/>
        <path d="M975 314.500L1061 314" stroke="#800000" stroke-width="1.400"/>
        <path d="M439.500 284v5M709 281v6M974.500 307v4" stroke="#fff" stroke-opacity=".8"/>

        <!-- floor beam -->
        <g fill="none">
          <use href="#pFloor" stroke="#800000" stroke-width="18"/><use href="#pFloor" stroke="url(#floor)" stroke-width="12.500"/><use href="#pFloor" stroke="#800000" stroke-width="1.400"/>
        </g>

        <!-- inner columns -->
        <g fill="none" stroke="#800000" stroke-width="8">
          <path d="M619.500 442C631 486 643 530 656.500 579M853 442C865 486 877 530 890 579"/>
          <path d="M621 448L656.500 579M854.500 448L890 579" stroke="url(#colR)" stroke-width="1.200" stroke-dasharray="1 3"/>
        </g>

        <!-- outer columns -->
        <g fill="none">
          <use href="#pColL" stroke="#800000" stroke-width="20"/><use href="#pColL" stroke="url(#colL)" stroke-width="14"/><use href="#pColL" stroke="#800000" stroke-width="1.400"/>
          <use href="#pColR" stroke="#800000" stroke-width="20"/><use href="#pColR" stroke="url(#colR)" stroke-width="14"/><use href="#pColR" stroke="#800000" stroke-width="1.400"/>
        </g>
        <path d="M357 305.500l13-3.500v14l-9 4z" fill="#c00000"/>
        <path d="M355 304l16-4.500M359 314l10-4M361 325l9-4M365 309l2 12M386 433l9 3M386 441l9 3M384 448l12 4M1073 434l11-2M1074 442l11-2M1078 450l9-2M1050 325h12M1048 314h13" fill="none" stroke="#800000" stroke-width="1.800"/>

        <path d="M859 304l46-18" stroke="#808020" stroke-dasharray="1 1.500"/>
        <text class="val" x="818" y="314">47.3</text>

        <use href="#support" x="424"/><use href="#support" x="657"/><use href="#support" x="890.500"/><use href="#support" x="1124"/>
        <use href="#axes" x="424" y="580"/><use href="#axes" x="330" y="623"/>
        <g class="axl">
          <text x="474" y="584" fill="#f00">X</text><text x="424" y="634" fill="#00f">Z</text>
          <text x="380" y="627" fill="#f00">X</text><text x="330" y="677" fill="#00f">Z</text>
        </g>
      </svg>
      <p class="note">Max u: 47.3, Min u: 0.0 mm</p>
    </section>

    <aside class="dock panel">
      <div class="dockhead"><span>Panel</span><button aria-label="Pin"><svg class="pin"><use href="#i-pin"/></svg></button><button aria-label="Close"><svg class="x"><use href="#i-x"/></svg></button></div>
      <div class="panelbody">
        <p>Global Deformations<br>u [mm]</p>
        <div class="scale">
          <div class="ramp"></div>
          <ol>
            <li>47.3</li><li>43.0</li><li>38.7</li><li>34.4</li><li>30.1</li><li>25.8</li>
            <li>21.5</li><li>17.2</li><li>12.9</li><li>8.6</li><li>4.3</li><li>0.0</li>
          </ol>
        </div>
        <table class="extremes">
          <tr><th>Max</th><td>:</td><td>47.3</td></tr>
          <tr><th>Min</th><td>:</td><td>0.0</td></tr>
        </table>
        <button class="find" aria-label="Details"><svg><use href="#i-find"/></svg></button>
      </div>
      <div class="tabs">
        <button class="sel" aria-label="Color scale"><svg class="ic"><use href="#i-legend"/></svg></button>
        <button aria-label="Factors"><svg class="ic"><use href="#i-scale"/></svg></button>
        <button aria-label="Filter"><svg class="ic dark"><use href="#i-scope"/></svg></button>
      </div>
    </aside>
  </main>

  <footer class="status">
    <div class="cell toggles">
      <button class="down">SNAP</button>
      <button>GRID</button>
      <button class="down">CARTES</button>
      <button class="down">OSNAP</button>
      <button class="down">GLINES</button>
      <button class="down">DXF</button>
    </div>
    <div class="cell c1"></div>
    <div class="cell c2"></div>
    <div class="cell c3"></div>
    <div class="cell c3"></div>
    <svg class="sizer" viewBox="0 0 12 12"><path d="M8 0h3v3H8zM4 4h3v3H4zM8 4h3v3H8zM0 8h3v3H0zM4 8h3v3H4zM8 8h3v3H8z" fill="#6b7078"/></svg>
  </footer>
</div>
</body>
</html>
```
FILE: styles.css
```css
* { box-sizing: border-box; }
body { margin: 0; font: 11px/16px "Noto Sans", "Open Sans", sans-serif; color: #000; }
button { font: inherit; color: inherit; background: none; border: 0; padding: 0; margin: 0; }
ul, ol, p { margin: 0; padding: 0; list-style: none; }
svg { display: block; flex: none; }
.sprite { position: absolute; width: 0; height: 0; }
.ic { width: 16px; height: 16px; }

.window { display: flex; flex-direction: column; height: 100vh; border: 1px solid #3fa4ea; background: #d0d4dd; }

/* title bar */
.titlebar { display: flex; align-items: center; height: 30px; padding-left: 8px; background: #fff; }
.caption { flex: 1; padding-left: 5px; }
.five { font: bold 12px "Liberation Sans", sans-serif; fill: #e5b400; stroke: #6b5200; stroke-width: .5px; }
.winbtns { display: flex; }
.winbtns button { width: 46px; height: 29px; display: flex; align-items: center; justify-content: center; }
.winbtns svg { width: 11px; height: 11px; }

/* menu */
.menubar { display: flex; align-items: center; height: 25px; padding-left: 2px; color: #48505e; }
.menubar > button { padding: 0 8px 0 7px; white-space: nowrap; }
.logo { width: 16px; height: 12px; margin-right: 3px; }
.mdi { display: flex; gap: 7px; margin-left: auto; padding: 4px 5px 0 0; }
.mdi svg { width: 9px; height: 9px; }
.grip { flex: none; width: 8px; height: 15px; background: repeating-linear-gradient(#9aa2b0 0 2px, transparent 2px 4px) 3px 0 / 2px 100% no-repeat; }

/* toolbars */
.toolrow { display: flex; gap: 2px; height: 26px; padding-left: 2px; flex: none; }
.bar { display: flex; align-items: center; height: 25px; padding-right: 2px; border-radius: 3px; border-bottom: 1px solid #aeb3be; background: linear-gradient(#eff1f5, #dde1ea 60%, #d3d8e2); }
.bar button { width: 22px; height: 22px; display: flex; align-items: center; justify-content: center; border: 1px solid transparent; border-radius: 2px; }
.bar .on { border-color: #c0a070; background: linear-gradient(#fbd9a8, #fcb867 45%, #fee9ae); }
.bar .dd { width: 35px; gap: 3px; }
.bar .dd::after { content: ""; border: 3px solid transparent; border-top: 3px solid #707888; border-bottom: 0; }
.sep { width: 1px; height: 15px; margin: 0 3px 0 4px; background: #a4aab6; }
.tiny { font: 7px "Liberation Serif", serif; }
.strong { font-weight: bold; }
.faint { fill: #7e8492; }
.dimx { font: italic bold 9px "Liberation Serif", serif; }
.axis { font: 11px "Liberation Serif", serif; }
.combo {
  appearance: none; width: 218px; height: 19px; margin: 0 1px; padding: 0 18px 0 3px; border: 1px solid #e8ebf2; color: #000; font: inherit;
  background:
    linear-gradient(45deg, transparent 50%, #777 50%) right 7px top 7px / 3px 3px no-repeat,
    linear-gradient(-45deg, transparent 50%, #777 50%) right 4px top 7px / 3px 3px no-repeat,
    linear-gradient(#e2e5ec, #e2e5ec) right top / 13px 100% no-repeat,
    #fff;
}

/* work area */
.work { flex: 1; display: flex; min-height: 0; }
.dock { display: flex; flex-direction: column; flex: none; }
.navigator { width: 267px; padding-left: 1px; }
.panel { width: 156px; margin-left: 5px; }
.dockhead { display: flex; align-items: center; height: 20px; padding: 0 5px 1px 3px; background: #b9c0cb; color: #48505e; border-bottom: 1px solid #aab1bd; }
.dockhead span { flex: 1; }
.dockhead button { margin-left: 8px; }
.pin { width: 9px; height: 11px; }
.x { width: 9px; height: 9px; }
.treebox { flex: 1; display: flex; padding: 2px 2px 0 2px; background: #eaeef4; border-bottom: 1px solid #777; border-right: 1px solid #9aa2b4; min-height: 0; }

/* tree */
.tree { flex: 1; padding: 0 0 0 7px; background: #fbfbf4; }
.tree li { background: repeating-linear-gradient(#777 0 1px, transparent 1px 2px) 4px 0 / 1px 100% no-repeat; }
.tree li:last-child { background-size: 1px 10px; }
.tree > li:first-child { background-position: 4px 10px; }
.tree ul { padding-left: 20px; }
.row { display: flex; align-items: center; height: 18px; background: repeating-linear-gradient(90deg, #777 0 1px, transparent 1px 2px) 4px 10px / 12px 1px no-repeat; }
.row label { display: flex; align-items: center; margin-left: auto; width: calc(100% - 18px); white-space: nowrap; }
.row input { appearance: none; width: 13px; height: 13px; margin: 0 2px 0 0; border: 1px solid #3e4653; background: linear-gradient(135deg, #fff, #c4d0e2); display: grid; place-items: center; }
.row input[type=radio] { border-radius: 50%; background: linear-gradient(135deg, #c4cede, #fff 70%); }
.row input[type=checkbox]:checked::before { content: ""; width: 4px; height: 7px; margin-bottom: 2px; border: solid #000; border-width: 0 2px 2px 0; rotate: 40deg; }
.row input[type=radio]:checked::before { content: ""; width: 5px; height: 5px; border-radius: 50%; background: #111; }
.row .mixed::before { content: ""; width: 7px; height: 7px; background: #969696; }
.ticon { width: 16px; height: 14px; margin-right: 5px; }
.ticon.g { height: 12px; }
.row small { font-size: 9px; line-height: 1; }
.exp { width: 9px; height: 9px; margin: 3px 0 0; border: 1px solid #8f939b; background: linear-gradient(#2c4a88, #2c4a88) center / 5px 1px no-repeat, #f6f7fa; flex: none; }
.exp.plus { background: linear-gradient(#2c4a88, #2c4a88) center / 5px 1px no-repeat, linear-gradient(#2c4a88, #2c4a88) center / 1px 5px no-repeat, #f6f7fa; }
.scroll { width: 15px; display: flex; flex-direction: column; background: #f0f0f0; }
.scroll button { height: 17px; display: flex; align-items: center; justify-content: center; }
.scroll svg { width: 9px; height: 6px; }
.thumb { height: 17px; background: #cdcdcd; margin-bottom: auto; }

/* bottom tabs */
.tabs { display: flex; height: 22px; padding: 0 2px 1px; color: #48505e; }
.tabs button { display: flex; align-items: center; gap: 2px; padding: 0 2px 0 3px; margin-right: 6px; }
.tabs .sel { background: #f4f6f8; border: 1px solid #bfeaf0; border-top: 0; border-radius: 0 0 4px 4px; }
.blue { color: #3558b0; }
.dark { color: #26282c; }

/* graphics view */
.view { flex: 1; display: flex; flex-direction: column; min-width: 0; margin-left: 6px; padding: 5px 0; background: #fff; border: solid #6d6d70; border-width: 1px 0 0 1px; }
.note { padding-left: 4px; font: 11px/14px "Liberation Sans", Arial, sans-serif; }
.model { flex: 1; width: 100%; min-height: 0; }
.val { font: 10px "Liberation Sans", Arial, sans-serif; fill: #9a8a00; }
.axl { font: 10px "Liberation Sans", Arial, sans-serif; text-anchor: middle; }

/* control panel */
.panelbody { flex: 1; display: flex; flex-direction: column; padding: 3px 4px 0 5px; background: #efefef; border: solid #a0a8b6; border-width: 0 1px 1px; border-bottom-color: #777; }
.panelbody p { line-height: 17px; margin-bottom: 1px; }
.scale { display: flex; align-items: center; justify-content: center; height: 214px; padding: 1px 0 9px; margin-bottom: 9px; background: #faf6f0; border: solid #9a9a9a; border-width: 1px 0 0 1px; }
.ramp { width: 28px; height: 188px; border: 1px solid #000; background: linear-gradient(#b40000 3%, #b80000 5%, #f00 13%, #ffa500 22%, #d0d000 33%, #ff0 41%, #0f0 50%, #00e080 59%, #00f4f4 68%, #00a0ff 77%, #00f 86%, #0000a0 96%); }
.scale li { display: flex; align-items: center; justify-content: space-between; width: 32px; line-height: 17px; }
.scale li::before { content: ""; width: 6px; height: 1px; background: #000; }
.extremes { width: 100%; border-spacing: 0; background: #f0f3fa; border: 1px solid #dde2f4; border-right-color: #a4a4ec; border-bottom-color: #a4a4ec; padding: 1px 42px 0 41px; }
.extremes th { font-weight: normal; text-align: left; padding: 0; }
.extremes td { text-align: right; padding: 0; line-height: 17px; }
.find { width: 25px; height: 21px; margin: auto 0 136px auto; border: 1px solid #adadad; background: #e1e1e1; display: flex; align-items: center; justify-content: center; }
.find svg { width: 18px; height: 16px; }
.panel .tabs button { padding: 0 4px; }

/* status bar */
.status { display: flex; height: 22px; flex: none; border-top: 1px solid #a4a9b2; background: linear-gradient(#d9dce2, #c2c6ce 40%, #a8adb6 50%, #b9bdc6); font-family: Roboto, sans-serif; font-size: 12px; color: #22262c; }
.cell { border-right: 1px solid #94989f; margin: 2px 0; }
.toggles { display: flex; flex: 1; justify-content: flex-end; gap: 3px; margin: 1px 0; }
.toggles button { padding: 0 1px; line-height: 16px; border: 1px solid; border-color: #eee #888 #888 #eee; }
.toggles .down { border-color: #000 #fff #fff #000; padding-top: 1px; }
.c1 { width: 152px; }
.c2 { width: 88px; }
.c3 { width: 74px; }
.sizer { width: 12px; height: 12px; margin: auto 0 0 79px; }
```
